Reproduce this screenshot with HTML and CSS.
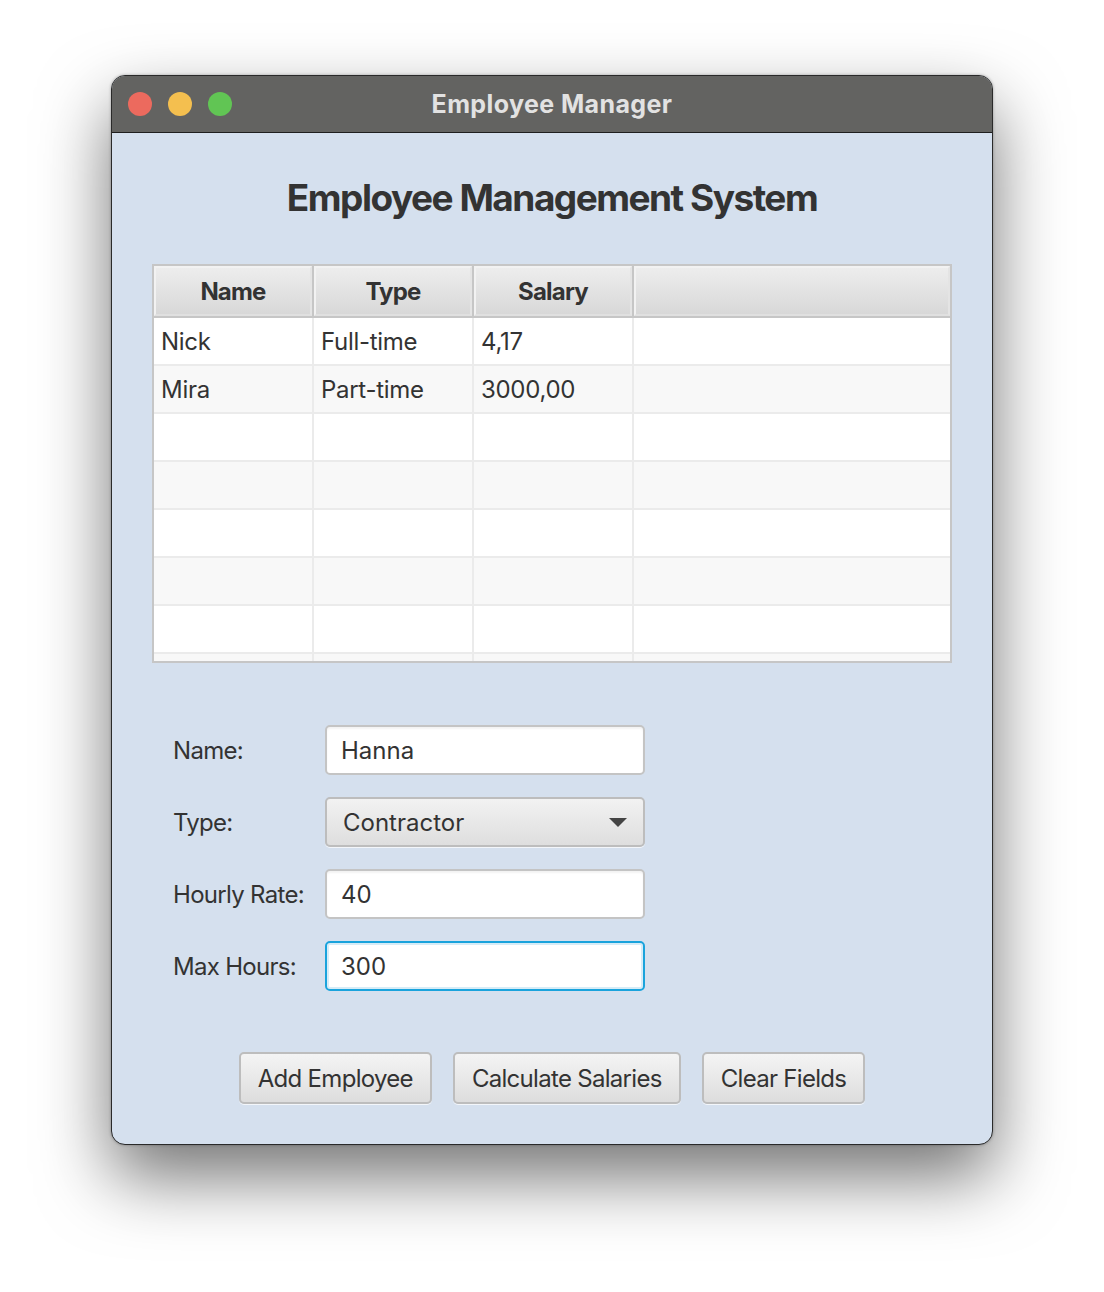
FILE: index.html
```html
<!DOCTYPE html>
<html>
<head>
<meta charset="utf-8">
<link rel="stylesheet" href="styles.css">
</head>
<body>
<div class="window">
  <div class="titlebar">
    <div class="lights">
      <span class="light red"></span>
      <span class="light yellow"></span>
      <span class="light green"></span>
    </div>
    <div class="wtitle">Employee Manager</div>
  </div>
  <div class="content">
    <h1 class="heading">Employee Management System</h1>
    <div class="table">
      <div class="thead">
        <div class="th">Name</div>
        <div class="th">Type</div>
        <div class="th">Salary</div>
        <div class="th filler"></div>
      </div>
      <div class="tbody">
        <div class="tr"><div class="td">Nick</div><div class="td">Full-time</div><div class="td">4,17</div><div class="td"></div></div>
        <div class="tr odd"><div class="td">Mira</div><div class="td">Part-time</div><div class="td">3000,00</div><div class="td"></div></div>
        <div class="tr"><div class="td"></div><div class="td"></div><div class="td"></div><div class="td"></div></div>
        <div class="tr odd"><div class="td"></div><div class="td"></div><div class="td"></div><div class="td"></div></div>
        <div class="tr"><div class="td"></div><div class="td"></div><div class="td"></div><div class="td"></div></div>
        <div class="tr odd"><div class="td"></div><div class="td"></div><div class="td"></div><div class="td"></div></div>
        <div class="tr"><div class="td"></div><div class="td"></div><div class="td"></div><div class="td"></div></div>
        <div class="tr odd"><div class="td"></div><div class="td"></div><div class="td"></div><div class="td"></div></div>
      </div>
    </div>
    <div class="form">
      <label class="flabel">Name:</label>
      <div class="field">Hanna</div>
      <label class="flabel">Type:</label>
      <div class="combo"><span>Contractor</span><span class="arrow"></span></div>
      <label class="flabel">Hourly Rate:</label>
      <div class="field">40</div>
      <label class="flabel">Max Hours:</label>
      <div class="field focused">300</div>
    </div>
    <div class="buttons">
      <div class="btn">Add Employee</div>
      <div class="btn">Calculate Salaries</div>
      <div class="btn">Clear Fields</div>
    </div>
  </div>
</div>
</body>
</html>
```
FILE: styles.css
```css
html, body {
  margin: 0;
  padding: 0;
  background: #ffffff;
}
body {
  font-family: Inter, "Noto Sans", "Liberation Sans", sans-serif;
  color: #333333;
  padding: 75px 0 0 111px;
  min-height: 1292px;
  box-sizing: border-box;
}
.window {
  width: 880px;
  height: 1068px;
  border: 1px solid #2a2a2a;
  border-radius: 14px;
  overflow: hidden;
  background: #d5e0ee;
  box-shadow: 0 32px 70px rgba(0,0,0,0.55), 0 0 3px rgba(0,0,0,0.3);
  display: flex;
  flex-direction: column;
}
.titlebar {
  height: 56px;
  background: #636361;
  border-bottom: 1px solid #1e1e1e;
  display: flex;
  align-items: center;
  position: relative;
}
.lights {
  display: flex;
  gap: 16px;
  padding-left: 16px;
}
.light {
  width: 24px;
  height: 24px;
  border-radius: 50%;
  display: block;
}
.red { background: #ec6a5e; }
.yellow { background: #f4bf4f; }
.green { background: #61c554; }
.wtitle {
  position: absolute;
  left: 0;
  right: 0;
  top: 0;
  height: 56px;
  line-height: 56px;
  text-align: center;
  color: #e2e2e2;
  font-weight: 700;
  font-size: 25px;
  letter-spacing: 0.4px;
}
.content {
  flex: 1;
  padding: 41px 40px 0 40px;
  display: flex;
  flex-direction: column;
}
.heading {
  margin: 0;
  text-align: center;
  font-size: 37px;
  line-height: 48px;
  font-weight: 700;
  letter-spacing: -1.5px;
  color: #333333;
  height: 48px;
}
.table {
  margin-top: 42px;
  width: 800px;
  height: 399px;
  box-sizing: border-box;
  border: 2px solid #c6c6c6;
  background: #ffffff;
  overflow: hidden;
}
.thead {
  display: grid;
  grid-template-columns: 160px 160px 160px 1fr;
  height: 52px;
  border-bottom: 2px solid #c6c6c6;
  box-sizing: border-box;
  background: #c6c6c6;
}
.th {
  background: linear-gradient(#ededed, #d8d8d8);
  border: 2px solid #f2f2f2;
  border-right-color: #e4e4e4;
  border-bottom-color: #e0e0e0;
  margin-right: 2px;
  display: flex;
  align-items: center;
  justify-content: center;
  font-weight: 700;
  font-size: 24px;
  letter-spacing: -0.8px;
  color: #333333;
}
.th.filler { margin-right: 0; }
.tr {
  display: grid;
  grid-template-columns: 160px 160px 160px 1fr;
  height: 48px;
  box-sizing: border-box;
  border-bottom: 2px solid #ebebeb;
  background: #ffffff;
}
.tr.odd { background: #f8f8f8; }
.td {
  border-right: 2px solid #ebebeb;
  display: flex;
  align-items: center;
  padding-left: 7px;
  font-size: 24px;
  letter-spacing: -0.3px;
  color: #333333;
}
.td:last-child { border-right: none; }
.form {
  margin-top: 62px;
  margin-left: 21px;
  display: grid;
  grid-template-columns: 152px 320px;
  row-gap: 22px;
  align-items: center;
}
.flabel {
  font-size: 24px;
  letter-spacing: -0.7px;
  color: #333333;
}
.field {
  height: 50px;
  box-sizing: border-box;
  border: 2px solid #c4c4c4;
  border-radius: 5px;
  background: #ffffff;
  display: flex;
  align-items: center;
  padding-left: 14px;
  font-size: 24px;
  color: #333333;
  box-shadow: inset 0 2px 2px rgba(0,0,0,0.05);
}
.field.focused {
  border: 2px solid #1aa3dc;
  box-shadow: inset 0 0 0 2px #d6ecf7;
}
.combo {
  height: 50px;
  box-sizing: border-box;
  border: 2px solid #bdbdbd;
  border-radius: 5px;
  background: linear-gradient(#f2f2f2, #dedede);
  box-shadow: 0 1px 0 rgba(255,255,255,0.7);
  display: flex;
  align-items: center;
  justify-content: space-between;
  padding: 0 16px 0 16px;
  font-size: 24px;
  color: #333333;
}
.arrow {
  width: 0;
  height: 0;
  border-left: 9px solid transparent;
  border-right: 9px solid transparent;
  border-top: 9px solid #444444;
}
.buttons {
  margin-top: 61px;
  display: flex;
  justify-content: center;
  gap: 21px;
}
.btn {
  height: 52px;
  box-sizing: border-box;
  border: 2px solid #bdbdbd;
  border-radius: 5px;
  background: linear-gradient(#f4f4f4, #dddddd);
  box-shadow: 0 1px 0 rgba(255,255,255,0.7);
  display: flex;
  align-items: center;
  padding: 0 17px;
  font-size: 24px;
  letter-spacing: -0.7px;
  color: #333333;
}
```
